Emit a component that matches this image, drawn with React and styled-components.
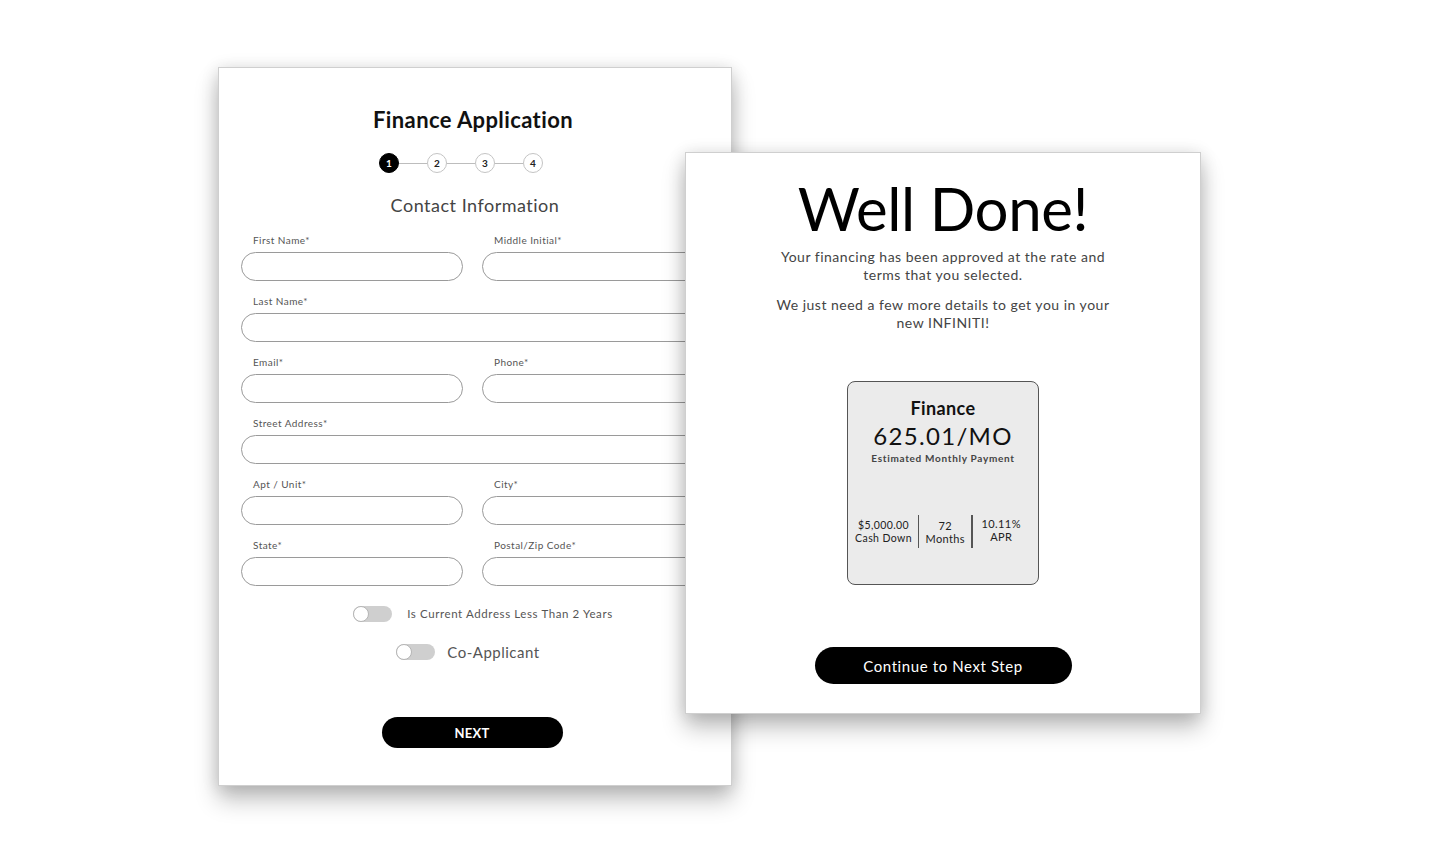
import React from "react";
import styled, { createGlobalStyle } from "styled-components";

const Global = createGlobalStyle`
  html, body { margin: 0; padding: 0; background: #ffffff; }
  body { font-family: "Lato", "Liberation Sans", sans-serif; color: #111; }
  * { box-sizing: border-box; }
`;

const Canvas = styled.div`
  position: relative;
  width: 1440px;
  height: 845px;
  overflow: hidden;
  background: #fff;
`;

const Window = styled.section`
  position: absolute;
  left: ${(p) => p.$x}px;
  top: ${(p) => p.$y}px;
  width: ${(p) => p.$w}px;
  height: ${(p) => p.$h}px;
  background: #fff;
  border: 1px solid #cfcfcf;
  box-shadow: 0 14px 22px rgba(0, 0, 0, 0.24), 0 2px 16px rgba(0, 0, 0, 0.14);
  display: flex;
  flex-direction: column;
  align-items: center;
`;

const FormWindow = styled(Window)`
  padding: 38px 22px 0 22px;
`;

const Title = styled.h1`
  margin: 0 4px 0 0;
  font-size: 22px;
  line-height: 28px;
  font-weight: 700;
  letter-spacing: 0.4px;
  color: #111;
`;

const Stepper = styled.div`
  display: flex;
  align-items: center;
  margin: 19px 28px 0 0;
`;

const StepDot = styled.div`
  width: 20px;
  height: 20px;
  border-radius: 50%;
  display: flex;
  align-items: center;
  justify-content: center;
  font-size: 10px;
  font-weight: 700;
  background: ${(p) => (p.$active ? "#000" : "#fff")};
  color: ${(p) => (p.$active ? "#fff" : "#222")};
  border: 1px solid ${(p) => (p.$active ? "#000" : "#c4c4c4")};
`;

const StepLine = styled.div`
  width: 28px;
  height: 1px;
  background: #bdbdbd;
`;

const Subtitle = styled.h2`
  margin: 21px 0 0 0;
  font-size: 18px;
  line-height: 22px;
  font-weight: 400;
  letter-spacing: 0.5px;
  color: #444;
`;

const Fields = styled.div`
  align-self: stretch;
  margin-top: 18px;
  display: grid;
  grid-template-columns: 222px 1fr;
  column-gap: 19px;
  row-gap: 14px;
`;

const Field = styled.label`
  display: flex;
  flex-direction: column;
  gap: 6px;
  grid-column: ${(p) => (p.$full ? "1 / -1" : "auto")};
`;

const FieldLabel = styled.span`
  font-size: 10px;
  line-height: 12px;
  letter-spacing: 0.45px;
  color: #555;
  padding-left: 12px;
`;

const Input = styled.div`
  height: 29px;
  border: 1.5px solid #9a9a9a;
  border-radius: 15px;
  background: #fff;
`;

const ToggleRow = styled.div`
  display: flex;
  align-items: center;
  gap: ${(p) => p.$gap}px;
  margin-top: ${(p) => p.$mt}px;
  transform: translateX(${(p) => p.$shift}px);
`;

const Track = styled.div`
  position: relative;
  width: 39px;
  height: 16px;
  border-radius: 8px;
  background: #cfcfcf;
`;

const Knob = styled.div`
  position: absolute;
  left: 0;
  top: 0;
  width: 16px;
  height: 16px;
  border-radius: 50%;
  background: #fff;
  border: 1px solid #b5b5b5;
`;

const ToggleText = styled.span`
  font-size: ${(p) => p.$size}px;
  letter-spacing: ${(p) => p.$ls}px;
  color: #555;
  line-height: 16px;
`;

const PillButton = styled.button`
  border: none;
  border-radius: 999px;
  background: #000;
  color: #fff;
  font-family: "Lato", "Liberation Sans", sans-serif;
  cursor: pointer;
  display: flex;
  align-items: center;
  justify-content: center;
`;

const NextButton = styled(PillButton)`
  margin: 57px 6px 0 0;
  width: 181px;
  height: 31px;
  font-size: 13px;
  font-weight: 700;
  letter-spacing: 0.3px;
`;

const DoneWindow = styled(Window)`
  padding-top: 19px;
`;

const BigTitle = styled.h1`
  margin: 0;
  font-size: 60px;
  line-height: 72px;
  font-weight: 400;
  letter-spacing: -0.4px;
  color: #000;
`;

const Para = styled.p`
  margin: ${(p) => p.$mt}px 0 0 0;
  max-width: 345px;
  text-align: center;
  font-size: 14px;
  line-height: 18px;
  letter-spacing: 0.5px;
  color: #444;
`;

const FinanceBox = styled.div`
  margin-top: 49px;
  width: 192px;
  height: 204px;
  background: #ebebeb;
  border: 1px solid #555;
  border-radius: 8px;
  display: flex;
  flex-direction: column;
  align-items: center;
  padding: 16px 0 36px 0;
`;

const BoxTitle = styled.div`
  font-size: 18px;
  line-height: 20px;
  font-weight: 700;
  letter-spacing: 0.4px;
  color: #111;
`;

const Amount = styled.div`
  margin-top: 4px;
  font-size: 24px;
  line-height: 28px;
  color: #111;
  letter-spacing: 1.3px;
`;

const AmountCaption = styled.div`
  margin-top: 2px;
  font-size: 10px;
  line-height: 12px;
  font-weight: 700;
  letter-spacing: 0.7px;
  color: #444;
`;

const Stats = styled.div`
  margin-top: auto;
  display: flex;
  align-items: stretch;
  gap: 6px;
  margin-left: -10px;
`;

const Stat = styled.div`
  display: flex;
  flex-direction: column;
  align-items: center;
  justify-content: center;
  text-align: center;
  font-size: ${(p) => p.$size || 10.5}px;
  line-height: 13px;
  letter-spacing: 0.4px;
  color: #222;
  padding-left: ${(p) => p.$pl || 0}px;
  transform: translateY(${(p) => p.$dy || 0}px);
`;

const Divider = styled.div`
  width: 1.5px;
  height: 33px;
  background: #555;
`;

const ContinueButton = styled(PillButton)`
  margin-top: 62px;
  width: 257px;
  height: 37px;
  font-size: 15px;
  font-weight: 400;
  letter-spacing: 0.6px;
`;

const leftFields = [
  { label: "First Name*" },
  { label: "Middle Initial*" },
  { label: "Last Name*", full: true },
  { label: "Email*" },
  { label: "Phone*" },
  { label: "Street Address*", full: true },
  { label: "Apt / Unit*" },
  { label: "City*" },
  { label: "State*" },
  { label: "Postal/Zip Code*" },
];

function Toggle() {
  return (
    <Track>
      <Knob />
    </Track>
  );
}

export default function App() {
  return (
    <>
      <Global />
      <Canvas>
        <FormWindow $x={218} $y={67} $w={514} $h={719}>
          <Title>Finance Application</Title>
          <Stepper>
            <StepDot $active>1</StepDot>
            <StepLine />
            <StepDot>2</StepDot>
            <StepLine />
            <StepDot>3</StepDot>
            <StepLine />
            <StepDot>4</StepDot>
          </Stepper>
          <Subtitle>Contact Information</Subtitle>
          <Fields>
            {leftFields.map((f) => (
              <Field key={f.label} $full={f.full}>
                <FieldLabel>{f.label}</FieldLabel>
                <Input />
              </Field>
            ))}
          </Fields>
          <ToggleRow $gap={15} $mt={20} $shift={8}>
            <Toggle />
            <ToggleText $size={11.5} $ls={0.6}>
              Is Current Address Less Than 2 Years
            </ToggleText>
          </ToggleRow>
          <ToggleRow $gap={12} $mt={22} $shift={-7}>
            <Toggle />
            <ToggleText $size={15} $ls={0.5}>
              Co-Applicant
            </ToggleText>
          </ToggleRow>
          <NextButton>NEXT</NextButton>
        </FormWindow>

        <DoneWindow $x={685} $y={152} $w={516} $h={562}>
          <BigTitle>Well Done!</BigTitle>
          <Para $mt={4}>
            Your financing has been approved at the rate and terms that you
            selected.
          </Para>
          <Para $mt={12}>
            We just need a few more details to get you in your new INFINITI!
          </Para>
          <FinanceBox>
            <BoxTitle>Finance</BoxTitle>
            <Amount>625.01/MO</Amount>
            <AmountCaption>Estimated Monthly Payment</AmountCaption>
            <Stats>
              <Stat>
                <span>$5,000.00</span>
                <span>Cash Down</span>
              </Stat>
              <Divider />
              <Stat $size={11}>
                <span>72</span>
                <span>Months</span>
              </Stat>
              <Divider />
              <Stat $size={11} $pl={3} $dy={-2}>
                <span>10.11%</span>
                <span>APR</span>
              </Stat>
            </Stats>
          </FinanceBox>
          <ContinueButton>Continue to Next Step</ContinueButton>
        </DoneWindow>
      </Canvas>
    </>
  );
}
